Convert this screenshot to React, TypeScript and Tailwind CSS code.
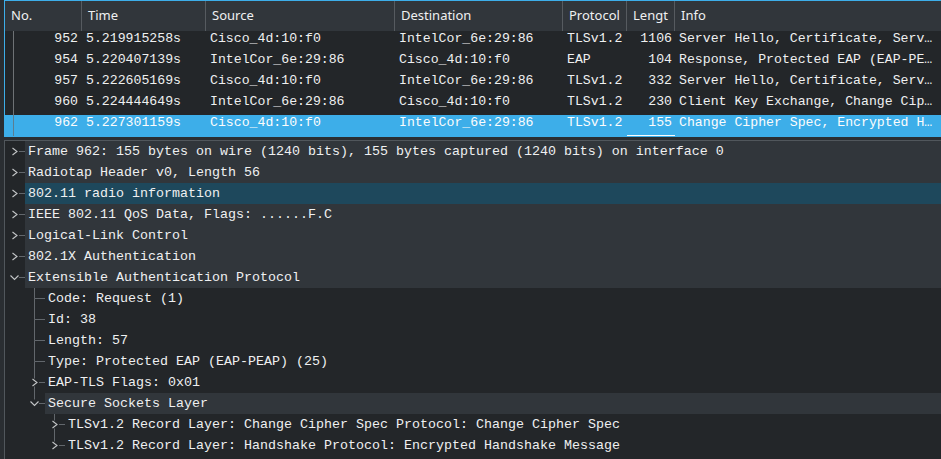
import React from 'react';

interface Packet {
  no: number;
  time: string;
  src: string;
  dst: string;
  proto: string;
  len: number;
  info: string;
}

interface TreeRow {
  text: string;
  level: number;
  kind: 'closed' | 'open' | 'leaf';
  last?: boolean;
  bg?: 'branch' | 'selected';
}

const packets: Packet[] = [
  { no: 952, time: '5.219915258s', src: 'Cisco_4d:10:f0', dst: 'IntelCor_6e:29:86', proto: 'TLSv1.2', len: 1106, info: 'Server Hello, Certificate, Server Key Exchange, Server Hello Done' },
  { no: 954, time: '5.220407139s', src: 'IntelCor_6e:29:86', dst: 'Cisco_4d:10:f0', proto: 'EAP', len: 104, info: 'Response, Protected EAP (EAP-PEAP)' },
  { no: 957, time: '5.222605169s', src: 'Cisco_4d:10:f0', dst: 'IntelCor_6e:29:86', proto: 'TLSv1.2', len: 332, info: 'Server Hello, Certificate, Server Hello Done' },
  { no: 960, time: '5.224444649s', src: 'IntelCor_6e:29:86', dst: 'Cisco_4d:10:f0', proto: 'TLSv1.2', len: 230, info: 'Client Key Exchange, Change Cipher Spec, Encrypted Handshake Message' },
  { no: 962, time: '5.227301159s', src: 'Cisco_4d:10:f0', dst: 'IntelCor_6e:29:86', proto: 'TLSv1.2', len: 155, info: 'Change Cipher Spec, Encrypted Handshake Message' },
];

const tree: TreeRow[] = [
  { text: 'Frame 962: 155 bytes on wire (1240 bits), 155 bytes captured (1240 bits) on interface 0', level: 0, kind: 'closed', bg: 'branch' },
  { text: 'Radiotap Header v0, Length 56', level: 0, kind: 'closed', bg: 'branch' },
  { text: '802.11 radio information', level: 0, kind: 'closed', bg: 'selected' },
  { text: 'IEEE 802.11 QoS Data, Flags: ......F.C', level: 0, kind: 'closed', bg: 'branch' },
  { text: 'Logical-Link Control', level: 0, kind: 'closed', bg: 'branch' },
  { text: '802.1X Authentication', level: 0, kind: 'closed', bg: 'branch' },
  { text: 'Extensible Authentication Protocol', level: 0, kind: 'open', bg: 'branch' },
  { text: 'Code: Request (1)', level: 1, kind: 'leaf' },
  { text: 'Id: 38', level: 1, kind: 'leaf' },
  { text: 'Length: 57', level: 1, kind: 'leaf' },
  { text: 'Type: Protected EAP (EAP-PEAP) (25)', level: 1, kind: 'leaf' },
  { text: 'EAP-TLS Flags: 0x01', level: 1, kind: 'closed' },
  { text: 'Secure Sockets Layer', level: 1, kind: 'open', last: true, bg: 'branch' },
  { text: 'TLSv1.2 Record Layer: Change Cipher Spec Protocol: Change Cipher Spec', level: 2, kind: 'closed' },
  { text: 'TLSv1.2 Record Layer: Handshake Protocol: Encrypted Handshake Message', level: 2, kind: 'closed', last: true },
];

const LINE = '#62676c';
const ARROW = '#c4c6c8';

const Branch = ({ row }: { row: TreeRow }) => {
  const w = (row.level + 1) * 20;
  const base = (row.level - 1) * 20;
  const lx = base + 29.5;
  const c = 10.5;
  const hasArrow = row.kind !== 'leaf';
  return (
    <svg width={w} height={21} className="shrink-0">
      {row.level > 0 && (
        <>
          <line x1={lx} y1={0} x2={lx} y2={hasArrow ? c - 4 : c} stroke={LINE} />
          {!row.last && <line x1={lx} y1={hasArrow ? c + 4 : c} x2={lx} y2={21} stroke={LINE} />}
        </>
      )}
      <line x1={hasArrow ? base + 34 : lx} y1={c} x2={base + 40} y2={c} stroke={LINE} />
      {row.kind === 'closed' && (
        <polyline
          points={`${base + 27.5},${c - 3.5} ${base + 32},${c} ${base + 27.5},${c + 3.5}`}
          fill="none"
          stroke={ARROW}
          strokeWidth={1.1}
        />
      )}
      {row.kind === 'open' && (
        <polyline
          points={`${base + 25.5},${c - 2} ${base + 29.5},${c + 2} ${base + 33.5},${c - 2}`}
          fill="none"
          stroke={ARROW}
          strokeWidth={1.1}
        />
      )}
    </svg>
  );
};

const App: React.FC = () => {
  return (
    <div className="flex h-[459px] w-[941px] flex-col overflow-hidden bg-[#2a2e32] pl-[4px]">
      {/* packet list */}
      <div className="border-b border-l border-t border-[#3daee9] bg-[#232629]">
        <div className="flex h-[30px] bg-[#31363b] font-['Noto_Sans',sans-serif] text-[13px] text-[#eff0f1]">
          <div className="flex w-[77px] shrink-0 items-center border-r border-[#565b60] pl-[6px]">No.</div>
          <div className="flex w-[124px] shrink-0 items-center border-r border-[#565b60] pl-[6px]">Time</div>
          <div className="flex w-[189px] shrink-0 items-center border-r border-[#565b60] pl-[6px]">Source</div>
          <div className="flex w-[168px] shrink-0 items-center border-r border-[#565b60] pl-[6px]">Destination</div>
          <div className="flex w-[64px] shrink-0 items-center border-r border-[#565b60] pl-[6px]">Protocol</div>
          <div className="flex w-[48px] shrink-0 items-center overflow-hidden whitespace-nowrap border-r border-[#565b60] pl-[6px]">Lengt</div>
          <div className="flex min-w-0 flex-1 items-center pl-[6px]">Info</div>
        </div>
        {packets.map((p) => {
          const sel = p.no === 962;
          return (
            <div
              key={p.no}
              className={`flex h-[21px] whitespace-pre font-['Liberation_Mono',monospace] text-[13.2px] leading-[15px] ${
                sel ? 'bg-[#3daee9] text-[#fcfcfc]' : 'text-[#eff0f1]'
              }`}
            >
              <div className="flex w-[77px] shrink-0">
                <span className={`ml-[8px] w-px ${sel ? 'bg-[#5c7d90]' : 'bg-[#6e7275]'}`} />
                <span className="flex-1 pr-[4px] text-right">{p.no}</span>
              </div>
              <div className="w-[124px] shrink-0 pl-[4px]">{p.time}</div>
              <div className="w-[189px] shrink-0 pl-[4px]">{p.src}</div>
              <div className="w-[168px] shrink-0 pl-[4px]">{p.dst}</div>
              <div className="w-[64px] shrink-0 pl-[4px]">{p.proto}</div>
              <div className={`w-[48px] shrink-0 pr-[3px] text-right ${sel ? 'shadow-[inset_0_-1px_0_#fcfcfc]' : ''}`}>{p.len}</div>
              <div className="min-w-0 flex-1 truncate pl-[4px] pr-[6px]">{p.info}</div>
            </div>
          );
        })}
      </div>

      {/* packet details */}
      <div className="mt-[3px] flex-1 border-l border-t border-[#51575c] bg-[#232629] font-['Liberation_Mono',monospace] text-[13.33px] leading-[21px] text-[#eff0f1]">
        {tree.map((r, i) => (
          <div key={i} className="flex h-[21px]">
            <Branch row={r} />
            <div
              className={`min-w-0 flex-1 whitespace-pre pl-[3px] ${
                r.bg === 'selected' ? 'bg-[#1e485c]' : r.bg === 'branch' ? 'bg-[#31363b]' : ''
              }`}
            >
              {r.text}
            </div>
          </div>
        ))}
      </div>
    </div>
  );
};

export default App;
